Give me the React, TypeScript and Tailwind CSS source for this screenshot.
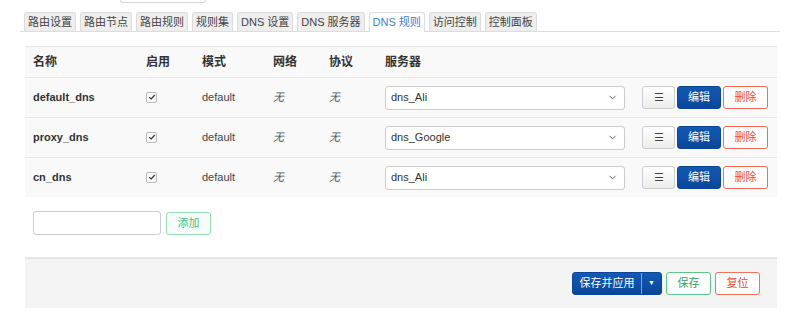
import { ChevronDown } from 'lucide-react';

const tabs = ['路由设置', '路由节点', '路由规则', '规则集', 'DNS 设置', 'DNS 服务器', 'DNS 规则', '访问控制', '控制面板'];

const rows = [
  { name: 'default_dns', server: 'dns_Ali' },
  { name: 'proxy_dns', server: 'dns_Google' },
  { name: 'cn_dns', server: 'dns_Ali' },
];

const cols = 'grid grid-cols-[113px_56px_71px_56px_56px_256px_1fr]';

function CheckBox() {
  return (
    <span className="flex h-[11px] w-[11px] items-center justify-center rounded-[2px] border border-[#bbb] bg-[#f7f7f7]">
      <svg viewBox="0 0 10 10" className="h-[8px] w-[8px]">
        <path d="M1.5 5.2 L4 7.5 L8.5 2.5" fill="none" stroke="#333" strokeWidth="1.5" />
      </svg>
    </span>
  );
}

export default function App() {
  return (
    <div className="relative h-[320px] w-[800px] overflow-hidden bg-white text-[#333]" style={{ fontFamily: '"Liberation Sans", Arial, "Noto Sans CJK SC", sans-serif' }}>
      <div className="ml-[120px] h-[3px] w-[86px] rounded-b-[3px] border border-t-0 border-[#d5d5d5]" />

      {/* tabs */}
      <div className="mx-[20px] mt-[9px] flex h-[20px] items-end gap-[4px] border-b border-[#ddd] pl-[4px]">
        {tabs.map(t => (
          <div
            key={t}
            className={
              t === 'DNS 规则'
                ? 'flex h-[20px] items-center rounded-t-[3px] border border-b-0 border-[#ddd] bg-white px-[3px] text-[11px] text-[#3b7ddd] -mb-px pb-px'
                : 'flex h-[19px] items-center rounded-t-[3px] border border-b-0 border-[#dcdcdc] bg-[#eee] px-[3px] text-[11px] text-[#444]'
            }
          >
            {t}
          </div>
        ))}
      </div>

      {/* table */}
      <div className="mx-[25px] mt-[14px] w-[752px] border-t border-[#e6e6e6]">
        <div className={`${cols} h-[30px] items-center bg-[#f9f9f9] text-[12px] font-bold text-[#333]`}>
          <span className="pl-[8px]">名称</span>
          <span className="pl-[8px]">启用</span>
          <span className="pl-[8px]">模式</span>
          <span className="pl-[8px]">网络</span>
          <span className="pl-[8px]">协议</span>
          <span className="pl-[8px]">服务器</span>
          <span />
        </div>
        {rows.map(r => (
          <div key={r.name} className={`${cols} h-[40px] items-center border-t border-[#e6e6e6] bg-[#f9f9f9] text-[11px]`}>
            <span className="pl-[8px] font-bold text-[#333]">{r.name}</span>
            <span className="pl-[8px] pb-[1px]"><CheckBox /></span>
            <span className="pl-[8px] text-[#444]">default</span>
            <span className="pl-[8px] italic text-[#555]">无</span>
            <span className="pl-[8px] italic text-[#555]">无</span>
            <span className="pl-[8px] pr-[8px]">
              <div className="flex h-[24px] items-center justify-between rounded-[3px] border border-[#ccc] bg-white pl-[5px] pr-[6px] text-[11px] text-[#333]">
                <span>{r.server}</span>
                <ChevronDown size={11} strokeWidth={2} className="text-[#555]" />
              </div>
            </span>
            <span className="flex items-center gap-[2px] pl-[9px]">
              <button className="flex h-[23px] w-[33px] items-center justify-center rounded-[3px] border border-[#ccc] bg-gradient-to-b from-white to-[#ececec] text-[11px] text-[#444]">☰</button>
              <button className="h-[23px] w-[44px] rounded-[3px] border border-[#0b4595] bg-gradient-to-b from-[#1459b6] to-[#0a4699] text-[11px] text-white">编辑</button>
              <button className="h-[23px] w-[45px] rounded-[3px] border border-[#f46a57] bg-white text-[11px] text-[#ef4a3b]">删除</button>
            </span>
          </div>
        ))}
      </div>

      {/* add */}
      <div className="ml-[33px] mt-[14px] flex items-center gap-[5px]">
        <div className="h-[24px] w-[128px] rounded-[3px] border border-[#ccc] bg-white" />
        <button className="h-[23px] w-[45px] rounded-[3px] border border-[#93dcb6] bg-[#f6fcf9] text-[11px] text-[#47bd7f]">添加</button>
      </div>

      {/* footer */}
      <div className="mx-[25px] mt-[22px] flex h-[51px] w-[752px] items-center justify-end gap-[4px] border-t-2 border-[#e5e5e5] bg-[#f4f4f4] pr-[17px]">
        <div className="flex h-[23px] items-stretch rounded-[3px] border border-[#0b4595] bg-gradient-to-b from-[#1459b6] to-[#0a4699] text-[11px] text-white">
          <span className="flex w-[68px] items-center justify-center">保存并应用</span>
          <span className="flex w-[20px] items-center justify-center border-l border-[#7fa6db] text-[7px]">▼</span>
        </div>
        <button className="h-[23px] w-[45px] rounded-[3px] border border-[#5ec58d] bg-white text-[11px] text-[#2ea660]">保存</button>
        <button className="h-[23px] w-[45px] rounded-[3px] border border-[#f2705f] bg-white text-[11px] text-[#e8463a]">复位</button>
      </div>
    </div>
  );
}
